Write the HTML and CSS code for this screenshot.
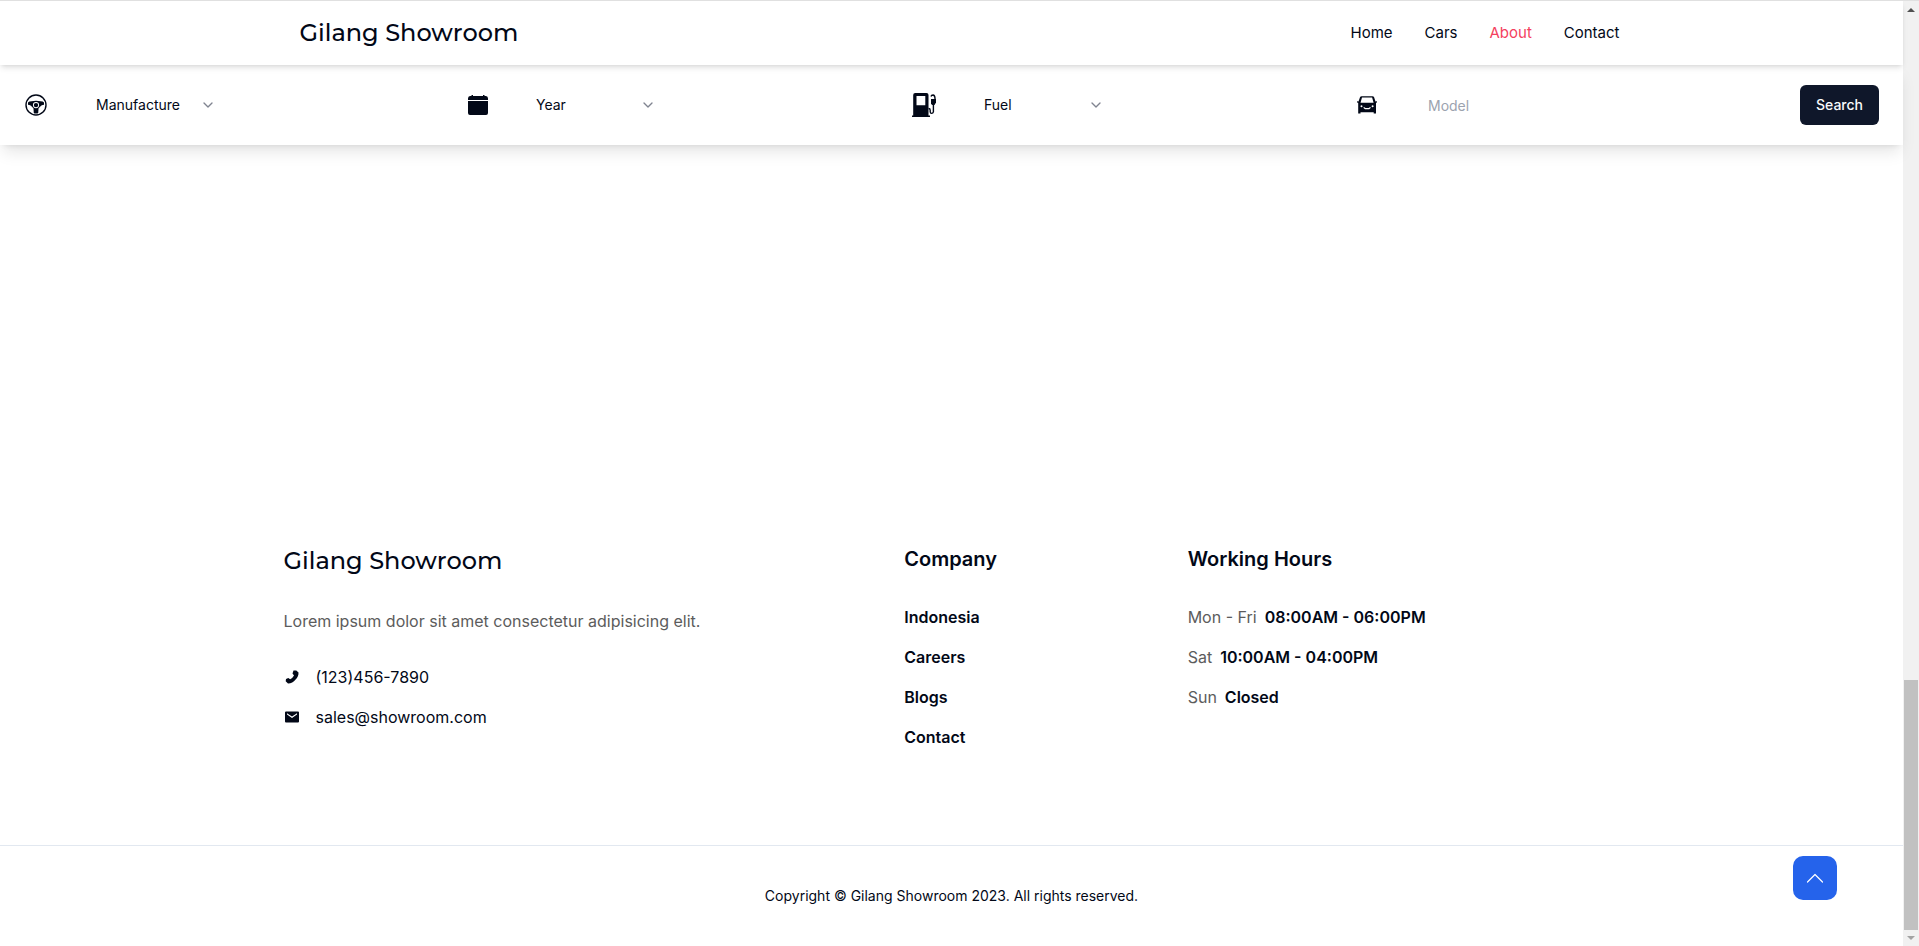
FILE: index.html
```html
<!DOCTYPE html>
<html lang="en">
<head>
<meta charset="utf-8">
<title>Gilang Showroom</title>
<link rel="stylesheet" href="styles.css">
</head>
<body>
<div class="page">
  <header class="header">
    <div class="header-inner">
      <a class="logo" href="#">Gilang Showroom</a>
      <nav class="nav">
        <a href="#">Home</a>
        <a href="#">Cars</a>
        <a class="active" href="#">About</a>
        <a href="#">Contact</a>
      </nav>
    </div>
  </header>
  <form class="search">
    <div class="field">
      <svg width="24" height="24" viewBox="0 0 24 24" aria-hidden="true"><circle cx="12" cy="12" r="10" fill="none" stroke="currentColor" stroke-width="1.4"/><path fill="currentColor" fill-rule="evenodd" d="M4 9.600Q5 8.300 7.500 8.300L12 7.700L16.500 8.300Q19 8.300 20 9.600V11.700Q17.600 11.800 16 13.800L14.500 15.400L14.200 20.200Q12 20.800 9.800 20.200L9.500 15.400L8 13.800Q6.400 11.800 4 11.700ZM12 9A3.100 3.100 0 1 0 12 15.200A3.100 3.100 0 1 0 12 9Z"/><circle cx="12" cy="12.100" r="2.200" fill="currentColor"/></svg>
      <div class="select-wrap">
        <select aria-label="Manufacture"><option>Manufacture</option></select>
        <svg class="chevron" width="16" height="16" viewBox="0 0 24 24" aria-hidden="true"><path d="m6 9 6 6 6-6"/></svg>
      </div>
    </div>
    <div class="field">
      <svg width="20" height="20" viewBox="0 0 20 20" fill="currentColor" aria-hidden="true"><path d="M3.500 1V0h1.500v1h10V0h1.500v1H18q2 .3 2 2.500V5H0V3.500Q0 1.300 2 1ZM0 6h20v12q0 2-2 2H2q-2 0-2-2Z"/></svg>
      <div class="select-wrap">
        <select aria-label="Year"><option>Year</option></select>
        <svg class="chevron" width="16" height="16" viewBox="0 0 24 24" aria-hidden="true"><path d="m6 9 6 6 6-6"/></svg>
      </div>
    </div>
    <div class="field">
      <svg width="24" height="24" viewBox="0 0 24 24" fill="currentColor" aria-hidden="true"><path fill-rule="evenodd" d="M1.200 22.500V2Q1.200 0 3.200 0H14.500Q16.500 0 16.500 2V22.500H18V24H0V22.500ZM4.500 3V12.200H13.300V3Z"/><path fill="none" stroke="currentColor" stroke-width="1.400" d="M16.500 15.500q1.700 0 1.700 1.700v1.600q0 1.600 1.400 1.600T21.400 18.800V10.500M19 3.500Q19.300 2 21 2q1.800.3 2 3V8"/><path d="M19 6h5v3.500L22.500 12H20l-1-1.500Z"/></svg>
      <div class="select-wrap">
        <select aria-label="Fuel"><option>Fuel</option></select>
        <svg class="chevron" width="16" height="16" viewBox="0 0 24 24" aria-hidden="true"><path d="m6 9 6 6 6-6"/></svg>
      </div>
    </div>
    <div class="field">
      <svg width="24" height="24" viewBox="0 0 24 24" fill="currentColor" aria-hidden="true"><path fill-rule="evenodd" d="M5.700 3.200H16.500Q17.700 3.200 18.100 4.200L19.500 8.500L21 8.200V9.500L20 9.800V20.500H17.700V19.200H4.500V20.500H2.200V9.800L1 9.500V8.200L2.500 8.500L4 4.200Q4.400 3.200 5.700 3.200ZM6 4.600L4.500 9.700H17.600L16.100 4.600ZM4.500 13.200A1 1 0 1 0 6.500 13.200A1 1 0 1 0 4.500 13.200ZM15.600 13.200A1 1 0 1 0 17.600 13.200A1 1 0 1 0 15.600 13.200ZM7.500 14.300V15L9 16.300H13.200L14.700 15V14.300H13.700L12.700 15.100H9.500L8.500 14.300Z"/></svg>
      <input class="model" type="text" placeholder="Model" aria-label="Model">
    </div>
    <button class="search-button" type="submit">Search</button>
  </form>
  <footer class="footer">
    <div class="footer-inner">
      <section>
        <a class="logo" href="#">Gilang Showroom</a>
        <p class="about">Lorem ipsum dolor sit amet consectetur adipisicing elit.</p>
        <ul class="list">
          <li class="contact"><svg width="16" height="16" viewBox="0 0 16 16" fill="currentColor" aria-hidden="true"><path d="M9.500 1.600 12.300 1.600 14.500 3.600Q14.700 7.600 11.600 10.500 8.400 14.500 4 14.400L1.700 12.300 2 10.100 4.300 9 6.200 10.300Q8.400 9.400 10 6.500L8.500 4.500Z"/></svg><a href="#">(123)456-7890</a></li>
          <li class="contact"><svg width="16" height="16" viewBox="0 0 16 16" fill="currentColor" aria-hidden="true"><path fill-rule="evenodd" d="M2 2.500h12q1 0 1 1v9q0 1-1 1H2q-1 0-1-1v-9q0-1 1-1ZM3 4.200V5.500L8 9l5-3.500V4.200L8 7.600Z"/></svg><a href="#">sales@showroom.com</a></li>
        </ul>
      </section>
      <section>
        <h2>Company</h2>
        <ul class="list strong">
          <li><a href="#">Indonesia</a></li>
          <li><a href="#">Careers</a></li>
          <li><a href="#">Blogs</a></li>
          <li><a href="#">Contact</a></li>
        </ul>
      </section>
      <section>
        <h2>Working Hours</h2>
        <ul class="list strong">
          <li class="hours"><span>Mon - Fri</span>08:00AM - 06:00PM</li>
          <li class="hours"><span>Sat</span>10:00AM - 04:00PM</li>
          <li class="hours"><span>Sun</span>Closed</li>
        </ul>
      </section>
    </div>
    <p class="copyright">Copyright © Gilang Showroom 2023. All rights reserved.</p>
  </footer>
</div>
<div class="scrollbar" aria-hidden="true">
  <svg width="16" height="16" viewBox="0 0 16 16" fill="#505050"><path d="M4 11 8 7l4 4Z"/></svg>
  <div class="track"><div class="thumb"></div></div>
  <svg width="16" height="16" viewBox="0 0 16 16" fill="#a3a3a3"><path d="M4 6h8l-4 4Z"/></svg>
</div>
<button class="to-top" type="button" aria-label="Back to top"><svg width="16" height="16" viewBox="0 0 16 16" fill="none" stroke="currentColor" stroke-width="1.200" stroke-linecap="round" stroke-linejoin="round"><path d="M0.500 12 8 4.500 15.500 12"/></svg></button>
</body>
</html>
```
FILE: styles.css
```css
* { box-sizing: border-box; margin: 0; padding: 0; }

body {
  display: flex;
  min-height: 100vh;
  border-top: 1px solid #e0e0e0;
  background: #fff;
  color: #020817;
  font: 400 16px/24px Inter, "Liberation Sans", sans-serif;
}

a { color: inherit; text-decoration: none; }
ul { list-style: none; }
svg { display: block; flex: none; }
button, input, select { font: inherit; color: inherit; border: 0; background: none; }

.page { flex: 1; min-width: 0; display: flex; flex-direction: column; }

.header {
  position: relative;
  z-index: 2;
  background: #fff;
  box-shadow: 0 4px 6px -1px rgb(0 0 0 / 10%), 0 2px 4px -2px rgb(0 0 0 / 10%);
}
.header-inner {
  display: flex;
  align-items: center;
  justify-content: space-between;
  max-width: 1400px;
  margin: 0 auto;
  padding: 16px 32px 16px 48px;
}
.logo {
  display: block;
  font: 500 24px/32px Montserrat, "DejaVu Sans", sans-serif;
}
.nav { display: flex; gap: 32px; font-size: 15px; }
.nav .active { color: #f43f5e; }

.search {
  position: relative;
  z-index: 1;
  display: flex;
  align-items: center;
  padding: 20px 24px;
  background: #fff;
  box-shadow: 0 10px 15px -3px rgb(0 0 0 / 10%), 0 4px 6px -4px rgb(0 0 0 / 10%);
  font-size: 14px;
}
.field { flex: 1; min-width: 0; display: flex; align-items: center; gap: 36px; }
.select-wrap { display: grid; width: 144px; align-items: center; }
.select-wrap > * { grid-area: 1 / 1; }
select { appearance: none; height: 40px; padding: 0 12px; outline: 0; }
.chevron {
  justify-self: end;
  margin-right: 12px;
  fill: none;
  stroke: #808490;
  stroke-width: 2;
  stroke-linecap: round;
  stroke-linejoin: round;
  pointer-events: none;
}
.model { flex: 1; min-width: 0; height: 40px; padding: 0 12px; outline: 0; }
.model::placeholder { color: #9ca3af; opacity: 1; }
.search-button {
  height: 40px;
  padding: 0 16px;
  border-radius: 6px;
  background: #0f172a;
  color: #f8fafc;
  font-weight: 500;
}

.footer { margin-top: auto; }
.footer-inner {
  display: grid;
  grid-template-columns: 46fr 21fr 32fr;
  max-width: 1400px;
  margin: 0 auto;
  padding: 0 32px 96px;
}
h2 { margin-bottom: 32px; font-size: 20px; font-weight: 600; line-height: 28px; }
.about { margin: 32px 0; color: #5c5c5c; }
.list { display: grid; gap: 16px; }
.strong { font-weight: 600; }
.contact { display: flex; align-items: center; gap: 16px; }
.hours { display: flex; gap: 8px; }
.hours span { color: #5c5c5c; font-weight: 400; }
.copyright {
  padding: 38px 16px;
  border-top: 1px solid #e2e8f0;
  font-size: 14px;
  text-align: center;
}

.scrollbar { flex: none; display: flex; flex-direction: column; width: 16px; background: #f1f1f1; }
.track { flex: 1; display: flex; align-items: flex-end; padding: 0 1px; }
.thumb { width: 100%; height: 27.4%; background: #c1c1c1; }

.to-top {
  position: fixed;
  right: 82px;
  bottom: 46px;
  display: grid;
  place-items: center;
  width: 44px;
  height: 44px;
  border-radius: 10px;
  background: #2563eb;
  color: #fff;
}
```
